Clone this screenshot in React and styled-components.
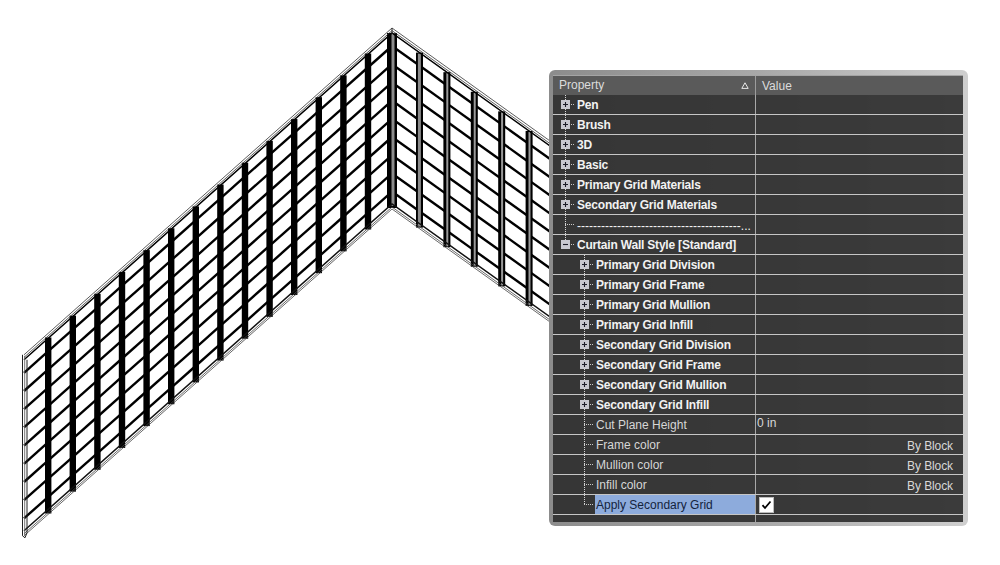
import React from "react";
import styled, { createGlobalStyle } from "styled-components";

const Global = createGlobalStyle`
  html, body { margin: 0; padding: 0; background: #fff; overflow: hidden; }
  body { font-family: "Liberation Sans", Arial, sans-serif; }
`;

const Stage = styled.main`
  position: relative;
  width: 1000px;
  height: 565px;
  background: #fff;
  overflow: hidden;
`;

const Drawing = styled.svg`
  display: block;
`;

const Panel = styled.section`
  position: absolute;
  left: 549px;
  top: 70px;
  width: 419px;
  height: 456px;
  box-sizing: border-box;
  padding: 5px 5px 4px 4px;
  border-radius: 6px;
  background: linear-gradient(to right, #8c8c8c 0, #a8a8a8 50%, #cfcfcf 100%);
  display: flex;
  flex-direction: column;
`;

const Header = styled.header`
  display: grid;
  grid-template-columns: 203px 1fr;
  grid-template-rows: 19px;
  height: 20px;
  box-sizing: border-box;
  border-top: 1px solid #a4a4a4;
  background: #5a5a5a;
  color: #dcdcdc;
  font-size: 12px;
  line-height: 21px;
`;

const HeaderName = styled.div`
  display: flex;
  align-items: center;
  justify-content: space-between;
  padding: 0 5px 0 6px;
  border-right: 1px solid #9c9c9c;
`;

const HeaderValue = styled.div`
  padding-left: 6px;
`;

const Rows = styled.div`
  flex: 1;
  background: rgba(47, 47, 47, 0.93);
  display: flex;
  flex-direction: column;
`;

const Row = styled.div`
  display: grid;
  grid-template-columns: 203px 1fr;
  grid-template-rows: 19px;
  height: 20px;
  box-sizing: border-box;
  border-bottom: 1px solid #c6c6c6;
`;

const NameCell = styled.div`
  display: flex;
  align-items: stretch;
  padding-left: ${(p) => (p.$level ? 19 : 0)}px;
  border-right: 1px solid #a8a8a8;
  min-width: 0;
`;

const Gutter = styled.div`
  flex: none;
  width: 23px;
  display: flex;
  align-items: center;
  background-image:
    repeating-linear-gradient(to bottom, #d8d8d8 0 1px, transparent 1px 2px),
    repeating-linear-gradient(to right, #c8c8c8 0 1px, transparent 1px 2px);
  background-size: 1px ${(p) => (p.$last ? "50%" : "100%")}, 10px 1px;
  background-position: 12px 0, 12px 50%;
  background-repeat: no-repeat;
`;

const ExpandIcon = styled.svg`
  display: block;
  margin-left: 8px;
`;

const Label = styled.div`
  flex: 1;
  min-width: 0;
  height: 19px;
  padding-left: 1px;
  font-size: 12px;
  line-height: 21px;
  white-space: nowrap;
  font-weight: ${(p) => (p.$bold ? 700 : 400)};
  letter-spacing: ${(p) => (p.$bold ? "-0.2px" : "0")};
  color: ${(p) => (p.$selected ? "#14233c" : p.$bold ? "#f2f2f2" : "#d6d6d6")};
  background: ${(p) => (p.$selected ? "#8dabdc" : "transparent")};
`;

const DashLabel = styled.div`
  flex: 1;
  min-width: 0;
  height: 19px;
  padding-left: 1px;
  font-size: 12px;
  line-height: 23px;
  color: #f4f4f4;
  white-space: nowrap;
`;

const ValueCell = styled.div`
  display: flex;
  align-items: ${(p) => (p.$right ? "flex-end" : "center")};
  justify-content: ${(p) => (p.$right ? "flex-end" : "flex-start")};
  padding: ${(p) => (p.$right ? "0 10px 1px 0" : "0 0 3px 1px")};
  font-size: 12px;
  letter-spacing: ${(p) => (p.$right ? "-0.1px" : "0")};
  line-height: 14px;
  color: #d8d8d8;
`;

const Checkbox = styled.span`
  display: flex;
  align-items: center;
  justify-content: center;
  width: 15px;
  height: 16px;
  margin: 3px 0 0 2px;
  box-sizing: border-box;
  background: #fff;
  border: 1px solid #bdbdbd;
`;

const Footer = styled.div`
  height: 7px;
`;

const FooterSplit = styled.div`
  width: 203px;
  height: 100%;
  box-sizing: border-box;
  border-right: 1px solid #a8a8a8;
`;

/* ----- drawing of the curtain wall ----- */

const AX = 392;
const SL = 0.888;
const SR = 0.715;
const topL = (x) => 28 + (AX - x) * SL;
const topR = (x) => 28 + (x - AX) * SR;
const H = 177;
const leftBars = Array.from({ length: 14 }, (_, k) => 48 + 24.6 * k);
const rightBars = Array.from({ length: 12 }, (_, k) => AX + 27.4 * (k + 1));
const END_R = 722;

function Wing({ edges, top }) {
  const lines = [];
  edges.slice(0, -1).forEach((a, i) => {
    const b = edges[i + 1];
    for (let j = 1; j <= 9; j += 1) {
      const d = 18 + (j - 1) * 18.2;
      lines.push(
        <line key={`${i}-${j}`} x1={a} y1={top(a) + d} x2={b} y2={top(b) + d} stroke="#000" strokeWidth="2.4" />
      );
    }
  });
  return <g>{lines}</g>;
}

function WallDrawing() {
  const lEdges = [24, ...leftBars, AX];
  const rEdges = [AX, ...rightBars, END_R];
  const topOffsets = [0, 2.6, 5];
  const bottomOffsets = [0, 3, 5];
  return (
    <Drawing width="1000" height="565" viewBox="0 0 1000 565" aria-hidden="true">
      <Wing edges={lEdges} top={topL} />
      <Wing edges={rEdges} top={topR} />
      {leftBars.map((x) => (
        <rect key={x} x={x - 3} y={topL(x) + 4} width="6.4" height={H - 1} fill="#000" />
      ))}
      {rightBars.map((x, i) => (
        <g key={x}>
          <rect x={x - 3.4} y={topR(x) + 5} width="7" height={H - 2} fill="#000" />
          <rect x={x - (i === 0 ? 1.5 : 0.5)} y={topR(x) + 6} width={i === 0 ? 3 : 2} height={H - 4} fill={i === 0 ? "#8a8a8a" : "#9a9a9a"} />
        </g>
      ))}
      <rect x={AX - 5} y={33} width="10" height={H - 2} fill="#000" />
      <rect x={AX - 0.5} y={33} width="3" height={H - 4} fill="#8c8c8c" />
      {topOffsets.map((o, i) => (
        <polyline
          key={`t${o}`}
          points={`24,${topL(24) + o} ${AX},${28 + o} ${END_R},${topR(END_R) + o}`}
          fill="none"
          stroke={i === 2 ? "#000" : "#333"}
          strokeWidth={i === 2 ? 1.5 : 0.8}
        />
      ))}
      {bottomOffsets.map((o, i) => (
        <polyline
          key={`b${o}`}
          points={`24,${topL(24) + 176 + o} ${AX},${28 + 176 + o} ${END_R},${topR(END_R) + 176 + o}`}
          fill="none"
          stroke={i === 0 ? "#111" : "#444"}
          strokeWidth={i === 0 ? 1.5 : 0.8}
        />
      ))}
      <polyline points={`22.5,${topL(24)} 22.5,${topL(24) + 181} 25,${topL(24) + 183} 27,${topL(24) + 178} 27,${topL(24) + 5}`} fill="none" stroke="#222" strokeWidth="1" />
      <line x1="24.7" y1={topL(24) + 1} x2="24.7" y2={topL(24) + 181} stroke="#666" strokeWidth="0.9" />
      <line x1={AX} y1="28" x2={AX} y2="34" stroke="#222" strokeWidth="1" />
      <rect x={END_R} y={topR(END_R)} width="4" height="180" fill="none" stroke="#222" />
    </Drawing>
  );
}

/* ----- property tree ----- */

function Expand({ open }) {
  return (
    <ExpandIcon width="9" height="9" viewBox="0 0 9 9">
      <rect width="9" height="9" fill="#c8c8d0" />
      <path d={open ? "M2 4.5H7" : "M2 4.5H7M4.5 2V7"} stroke="#1c1c28" strokeWidth="1.1" fill="none" />
    </ExpandIcon>
  );
}

const ROWS = [
  { name: "Pen", kind: "closed" },
  { name: "Brush", kind: "closed" },
  { name: "3D", kind: "closed" },
  { name: "Basic", kind: "closed" },
  { name: "Primary Grid Materials", kind: "closed" },
  { name: "Secondary Grid Materials", kind: "closed" },
  { name: `${"-".repeat(41)}...`, kind: "dash" },
  { name: "Curtain Wall Style [Standard]", kind: "open", last: true },
  { name: "Primary Grid Division", kind: "closed", level: 1 },
  { name: "Primary Grid Frame", kind: "closed", level: 1 },
  { name: "Primary Grid Mullion", kind: "closed", level: 1 },
  { name: "Primary Grid Infill", kind: "closed", level: 1 },
  { name: "Secondary Grid Division", kind: "closed", level: 1 },
  { name: "Secondary Grid Frame", kind: "closed", level: 1 },
  { name: "Secondary Grid Mullion", kind: "closed", level: 1 },
  { name: "Secondary Grid Infill", kind: "closed", level: 1 },
  { name: "Cut Plane Height", level: 1, value: "0 in" },
  { name: "Frame color", level: 1, value: "By Block", right: true },
  { name: "Mullion color", level: 1, value: "By Block", right: true },
  { name: "Infill color", level: 1, value: "By Block", right: true },
  { name: "Apply Secondary Grid", level: 1, check: true, selected: true, last: true },
];

function PropertyRow({ row }) {
  const bold = row.kind === "closed" || row.kind === "open";
  return (
    <Row>
      <NameCell $level={row.level}>
        <Gutter $last={row.last}>
          {bold && <Expand open={row.kind === "open"} />}
        </Gutter>
        {row.kind === "dash" ? (
          <DashLabel>{row.name}</DashLabel>
        ) : (
          <Label $bold={bold} $selected={row.selected}>{row.name}</Label>
        )}
      </NameCell>
      <ValueCell $right={row.right}>
        {row.value}
        {row.check && (
          <Checkbox>
            <svg width="11" height="10" viewBox="0 0 11 10">
              <path d="M1.5 5.2L4 8L9.5 1.5" fill="none" stroke="#000" strokeWidth="1.8" />
            </svg>
          </Checkbox>
        )}
      </ValueCell>
    </Row>
  );
}

export default function App() {
  return (
    <Stage>
      <Global />
      <WallDrawing />
      <Panel>
        <Header>
          <HeaderName>
            Property
            <svg width="10" height="8" viewBox="0 0 10 8">
              <path d="M5 .8L8.2 6.4H1.8Z" fill="none" stroke="#e8e8e8" strokeWidth="1" />
            </svg>
          </HeaderName>
          <HeaderValue>Value</HeaderValue>
        </Header>
        <Rows>
          {ROWS.map((row) => (
            <PropertyRow key={row.name} row={row} />
          ))}
          <Footer>
            <FooterSplit />
          </Footer>
        </Rows>
      </Panel>
    </Stage>
  );
}
